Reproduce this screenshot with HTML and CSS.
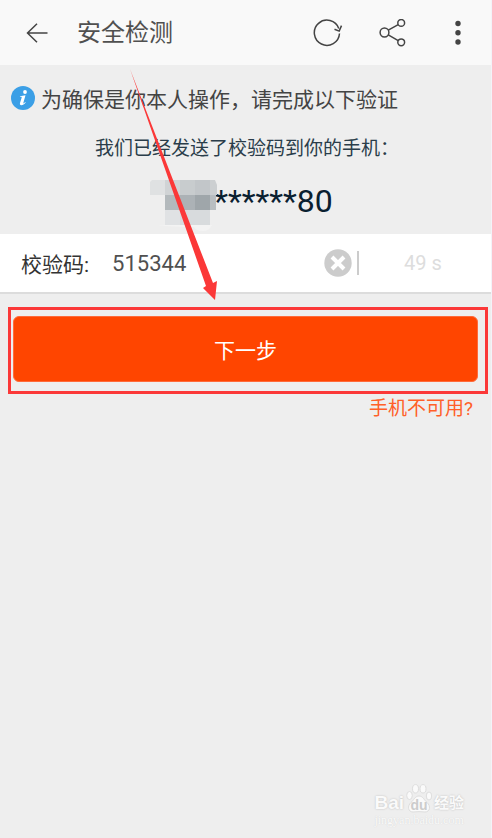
FILE: index.html
```html
<!DOCTYPE html>
<html lang="zh-CN">
<head>
<meta charset="utf-8">
<meta name="viewport" content="width=device-width, initial-scale=1">
<title>安全检测</title>
<link rel="stylesheet" href="styles.css">
</head>
<body>
<header class="bar">
  <button class="icon-button" type="button" aria-label="返回">
    <svg width="22" height="20" viewBox="0 0 22 20"><path d="M21.500 10H1.500M11 .8L1.500 10l9.500 9.200"/></svg>
  </button>
  <h1 class="title">安全检测</h1>
  <button class="icon-button" type="button" aria-label="刷新">
    <svg width="30" height="28" viewBox="0 0 30 28"><path d="M26.500 14.500A12.600 12.600 0 1 1 25.800 9.500M21.500 10.300l4.700 1.800 2.300-5.500"/></svg>
  </button>
  <button class="icon-button" type="button" aria-label="分享">
    <svg width="28" height="28" viewBox="0 0 28 28"><circle cx="5.500" cy="13.500" r="4.400"/><circle cx="22.200" cy="3.900" r="3.400"/><circle cx="22.200" cy="23.300" r="3.400"/><path d="M9.300 11.200l9.900-5.600M9.300 15.800l9.900 5.800"/></svg>
  </button>
  <button class="icon-button" type="button" aria-label="更多">
    <svg class="solid" width="6" height="26" viewBox="0 0 6 26"><circle cx="3" cy="3.500" r="2.700"/><circle cx="3" cy="12.700" r="2.700"/><circle cx="3" cy="22" r="2.700"/></svg>
  </button>
</header>
<main class="page">
  <p class="notice">
    <svg class="info" width="24" height="24" viewBox="0 0 24 24" aria-hidden="true"><circle cx="12" cy="12" r="12"/><circle class="mark" cx="14" cy="6" r="1.900"/><path class="mark" d="M9 10.200l5.500-.9-2.200 7.600c-.2.900.4.700 1.900-.9l.5.500c-1.600 2-2.800 2.700-4.300 2.700-1.300 0-1.800-.8-1.400-2.100l1.700-5.700c.1-.5-.4-.6-1.800-.6z"/></svg>
    <span>为确保是你本人操作，请完成以下验证</span>
  </p>
  <p class="sent">我们已经发送了校验码到你的手机：</p>
  <p class="phone">
    <svg class="mosaic" width="68" height="51" viewBox="0 0 68 51" aria-hidden="true">
      <path fill="#f3f3f3" d="M8 45h54q-3 6-9 6-7 0-9-4-20 0-36-2z"/>
      <path fill="#dfe1e2" d="M2 0h13v15H0V2z"/><path fill="#d0d3d5" d="M15 0h15v15H15z"/><path fill="#c8ccce" d="M30 0h15v15H30z"/><path fill="#c2c6c9" d="M45 0h15v15H45z"/><path fill="#cccfd1" d="M60 0h5l2 5v10h-7z"/>
      <path fill="#b3b9bc" d="M15 15h15v15H15z"/><path fill="#acb2b6" d="M30 15h15v15H30z"/><path fill="#9fa6aa" d="M45 15h15v15H45z"/><path fill="#b9bec1" d="M60 15h6v15h-6z"/>
      <path fill="#e0e2e4" d="M15 30h15v15H15z"/><path fill="#d8dbdd" d="M30 30h30v15H30z"/>
    </svg><span>******80</span>
  </p>
  <form class="form">
    <div class="field">
      <label for="code">校验码:</label>
      <input class="code" id="code" type="text" inputmode="numeric" value="515344">
      <button class="clear" type="button" aria-label="清除">
        <svg width="28" height="28" viewBox="0 0 28 28"><circle cx="14" cy="14" r="13.700"/><path d="M8 8l12 12M20 8L8 20"/></svg>
      </button>
      <button class="timer" type="button" disabled>49 s</button>
    </div>
    <div class="highlight">
      <button class="next" type="submit">下一步</button>
    </div>
    <a class="help" href="#">手机不可用?</a>
  </form>
  <svg class="arrow" width="90" height="234" viewBox="0 0 90 234" aria-hidden="true"><path d="M0 0L83 214l4-2-2 19-12-12 3-2z"/></svg>
</main>
<footer class="watermark">
  <div class="brand">
    <span>Bai</span>
    <span class="paw">
      <svg width="26" height="29" viewBox="0 0 26 29" aria-hidden="true"><ellipse cx="3.500" cy="11.500" rx="2.800" ry="4"/><ellipse cx="9.500" cy="4.800" rx="3" ry="4.200"/><ellipse cx="17" cy="4.800" rx="3" ry="4.200"/><ellipse cx="23" cy="12" rx="2.700" ry="4"/><path d="M13 12c-4 0-5 4-8 6.500C1 22 2 28 7 28q6-.7 12 0c5 0 6-6 2-9.500C18 16 17 12 13 12z"/></svg>
      <span class="du">du</span>
    </span>
    <span class="name">经验</span>
  </div>
  <div class="site">jingyan.baidu.com</div>
</footer>
</body>
</html>
```

FILE: styles.css
```css
* {
  box-sizing: border-box;
}

body {
  margin: 0;
  min-height: 100vh;
  display: flex;
  flex-direction: column;
  background: #eee;
  border-right: 1px solid #f3f3f9;
  color: #444;
  font-family: Roboto, "Noto Sans CJK SC", sans-serif;
  font-weight: 400;
}

button {
  padding: 0;
  border: 0;
  background: none;
  font: inherit;
}

h1,
p {
  margin: 0;
  font-weight: 400;
}

svg {
  display: block;
}

.bar {
  display: flex;
  align-items: center;
  height: 65px;
  padding: 0 30px 0 26px;
  background: #f9f9f9;
}

.icon-button svg {
  fill: none;
  stroke: #444;
  stroke-width: 1.5;
}

.icon-button .solid {
  fill: #444;
  stroke: none;
}

.title {
  flex: 1;
  margin-left: 29px;
  color: #505050;
  font-size: 24px;
  line-height: 34px;
}

.title ~ .icon-button + .icon-button {
  margin-left: 36px;
}

.title ~ .icon-button:last-child {
  margin-left: 48px;
}

.page {
  position: relative;
}

.notice {
  display: flex;
  align-items: center;
  gap: 6px;
  height: 66px;
  padding-left: 11px;
  font-size: 21px;
  white-space: nowrap;
}

.info {
  flex: none;
  fill: #3b9fe6;
}

.info .mark {
  fill: #fff;
}

.sent {
  padding: 2px 0 0 3px;
  color: #2a3d4a;
  font-size: 19px;
  line-height: 32px;
  text-align: center;
}

.phone {
  display: flex;
  align-items: center;
  justify-content: center;
  height: 69px;
  padding: 6px 8px 3px 0;
  color: #0a2030;
  font-size: 32px;
}

.mosaic {
  position: relative;
  z-index: 1;
  align-self: flex-end;
  margin-right: -4px;
}

.form {
  display: flex;
  flex-direction: column;
}

.field {
  display: flex;
  align-items: center;
  height: 60px;
  padding-left: 21px;
  border-bottom: 2px solid #dcdcdc;
  background: #fff;
  color: #333;
  font-size: 21px;
}

.code {
  flex: 1;
  min-width: 0;
  margin-left: 23px;
  padding: 0;
  border: 0;
  outline: 0;
  background: none;
  color: #505050;
  font-family: inherit;
  font-size: 22px;
  font-weight: inherit;
}

.clear svg {
  fill: #ccc;
}

.clear path {
  stroke: #fff;
  stroke-width: 4;
}

.timer {
  width: 134px;
  height: 24px;
  margin-left: 5px;
  padding-right: 4px;
  border-left: 2px solid #ccc;
  color: #ddd;
  font-size: 20px;
  line-height: 24px;
}

.highlight {
  margin: 13px 3px 0 8px;
  padding: 6px 7px 9px 2px;
  border: 3px solid #fb3838;
}

.next {
  display: block;
  width: 100%;
  height: 66px;
  border: 1px solid #ff6a3a;
  border-radius: 6px;
  background: #ff4500;
  color: #fff;
  font-size: 21px;
}

.help {
  align-self: flex-end;
  margin-right: 18px;
  color: #ff6028;
  font-size: 19px;
  line-height: 30px;
  text-decoration: none;
}

.arrow {
  position: absolute;
  z-index: 2;
  top: 4px;
  left: 130px;
  fill: #fb3838;
}

.watermark {
  align-self: flex-end;
  margin-top: auto;
  padding: 0 27px 11px 0;
  color: #fafafa;
  text-shadow: 0 0 2px #bbb;
}

.brand {
  display: flex;
  align-items: flex-end;
  gap: 2px;
  font-family: "Liberation Sans", "Noto Sans CJK SC", sans-serif;
  font-size: 19px;
  font-weight: 700;
  line-height: 20px;
}

.paw {
  position: relative;
}

.paw svg {
  fill: #fafafa;
  stroke: #ddd;
}

.du {
  position: absolute;
  right: 0;
  bottom: 0;
  left: 0;
  color: #ccc;
  font-size: 14px;
  line-height: 16px;
  text-align: center;
  text-shadow: none;
}

.name {
  font-size: 15px;
}

.site {
  font-family: "Liberation Serif", serif;
  font-size: 12px;
  line-height: 14px;
  text-shadow: 0 0 1px #ccc;
}
```
